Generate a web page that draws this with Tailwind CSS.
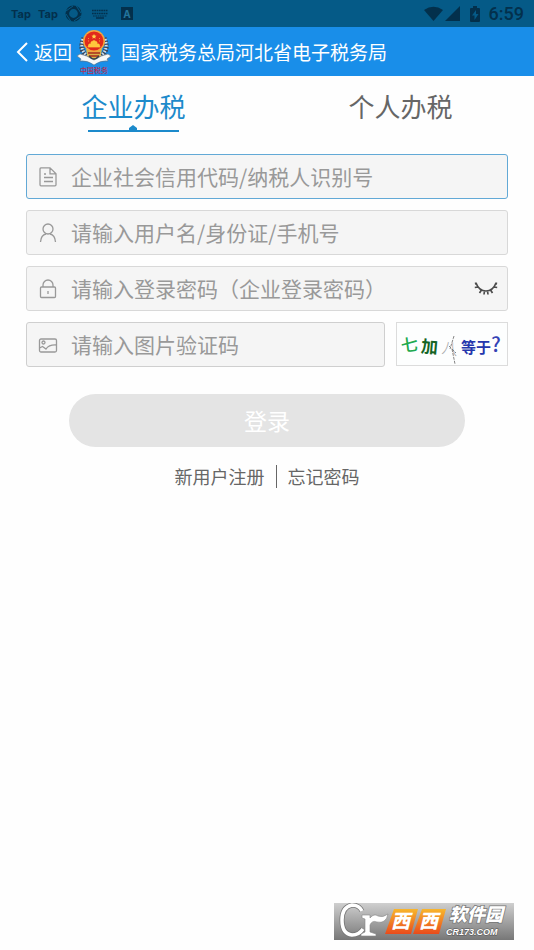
<!DOCTYPE html>
<html lang="zh-CN">
<head>
<meta charset="utf-8">
<meta name="viewport" content="width=device-width, initial-scale=1">
<title>国家税务总局河北省电子税务局</title>
<script src="https://cdn.jsdelivr.net/npm/@tailwindcss/browser@4"></script>
</head>
<body class="relative min-h-screen bg-[#fefefe] font-['Noto_Sans_CJK_SC',sans-serif] text-[#666]">

<!-- System status bar -->
<div class="flex h-[27px] items-center justify-between bg-[#055a87] pl-[11px] pr-[10px] text-[#03304c]">
  <div class="flex items-center font-['Inter',sans-serif] text-[11px] font-bold leading-4">
    <span class="w-[27px]">Tap</span>
    <span class="w-[27px]">Tap</span>
    <svg class="mr-[10px] size-[17px]" viewBox="0 0 17 17" fill="none" stroke="currentColor" stroke-width="3.600" aria-hidden="true">
      <circle cx="8.500" cy="8.500" r="6.200"/>
      <path d="M1 6L8 1M11 .5L16 8M16 11L9 16M6 16.500L1 9" stroke="#055a87" stroke-width="1"/>
    </svg>
    <svg class="mr-[13px] h-[10px] w-[16px]" viewBox="0 0 16 10" fill="none" stroke="currentColor" aria-hidden="true">
      <path d="M0 1.500h16M0 4.500h16" stroke-width="1.500" stroke-dasharray="1.700 .6"/><path d="M1 7h14" stroke-width="1" stroke-dasharray="1.700 .6"/><path d="M4 9h8" stroke-width="1.500"/>
    </svg>
    <span class="flex h-[13px] w-[12px] items-center justify-center bg-[#03304c] text-[10px] text-[#23759c]">A</span>
  </div>
  <div class="flex items-center">
    <svg class="h-[16px] w-[57px]" viewBox="0 0 57 16" fill="currentColor" aria-hidden="true">
      <path d="M0 4Q9.500-2.500 19 4L9.500 15z"/>
      <path d="M36 0V15H21z"/>
      <path fill-rule="evenodd" d="M49 0h4v2h2q1 0 1 1v12q0 1-1 1h-8q-1 0-1-1V3q0-1 1-1h2zM52 4l-4 5.500h2.500V14l4-6H52z"/>
    </svg>
    <span class="ml-[8px] font-['Roboto',sans-serif] text-[18px] font-medium leading-6">6:59</span>
  </div>
</div>

<!-- App header -->
<header class="flex h-[49px] items-center bg-[#198ee9] pl-[16px] text-[19px] leading-7 text-white">
  <button type="button" class="flex items-center gap-[6px]">
    <svg class="h-[20px] w-[12px]" viewBox="0 0 12 20" fill="none" stroke="currentColor" stroke-width="2" aria-hidden="true"><path d="M11 1L2 10l9 9"/></svg>
    <span>返回</span>
  </button>
  <svg class="ml-[5px] h-[46px] w-[34px] shrink-0" viewBox="0 0 34 46" role="img" aria-label="中国税务">
    <g fill="none" stroke="#39475b" stroke-width="5" stroke-dasharray="2 1"><path d="M7 9Q1 22 12 29M27 9Q33 22 22 29"/></g>
    <g fill="none" stroke="#d9dfe3" stroke-width="3" stroke-dasharray="1.500 1.500"><path d="M6 10Q2 22 12 28M28 10Q32 22 22 28"/></g>
    <path d="M9 20Q17 17 25 20L23 30L17 33L11 30z" fill="#d8b24b"/>
    <path d="M12 21h10M11 24h12M12 27h10" stroke="#a92c1e" stroke-width="1.500"/>
    <circle cx="17" cy="12" r="11" fill="#f5a63c"/>
    <circle cx="17" cy="12" r="9.500" fill="#e12a1c"/>
    <path d="M17 5l.8 1.600 1.700.2-1.300 1.200.4 1.700-1.600-.9-1.600.9.4-1.700-1.300-1.200 1.700-.2z" fill="#ffd44d"/>
    <path d="M11 18l1-3h2v-2l3-1.500 3 1.500v2h2l1 3zM11 9l1 1M23 9l-1 1M11 12h1M22 12h1" fill="#ffc83c" stroke="#ffc83c" stroke-width=".7"/>
    <path d="M0 27L3 25Q9 26 17 31Q25 26 31 25L34 27L30 30L31 32Q24 31 17 36Q10 31 3 32L4 30z" fill="#f6f8f8" stroke="#64727e" stroke-width=".6"/>
    <path d="M12 27Q17 33 22 27" fill="none" stroke="#36424f" stroke-width="1.500"/>
    <text x="3" y="44" font-family="Noto Sans CJK SC, sans-serif" font-size="7" font-weight="500" fill="#b32e55">中国税务</text>
  </svg>
  <h1 class="ml-[10px] whitespace-nowrap">国家税务总局河北省电子税务局</h1>
</header>

<main>
  <!-- Account type -->
  <div class="grid grid-cols-2 text-[26px] leading-[38px]" role="tablist">
    <button type="button" role="tab" aria-selected="true" class="flex flex-col items-center pt-[11px] text-[#1c8acb]">
      <span>企业办税</span>
      <svg class="h-[7px] w-[91px]" viewBox="0 0 91 7" fill="currentColor" aria-hidden="true"><path d="M0 5h41v-2l4-3 4 3v2h42v2H0z"/></svg>
    </button>
    <button type="button" role="tab" aria-selected="false" class="flex flex-col items-center pt-[11px]">个人办税</button>
  </div>

  <form class="flex flex-col gap-[11px] px-[26px] pt-[22px] text-[21px] leading-[30px]">
    <label class="flex h-[45px] items-center gap-[13px] rounded-[3px] border border-[#62a9d6] bg-[#f5f5f5] pl-[11px]">
      <svg class="size-[20px] shrink-0" viewBox="0 0 20 20" fill="none" stroke="#999" stroke-width="1.300" aria-hidden="true"><path d="M3 .8h9l6 6v11q0 1-1 1H3q-1 0-1-1V2q0-1 1-1.200zM12 .8v6h6M6 10.500h9M6 14.500h9M6 7h2"/></svg>
      <input type="text" aria-label="企业社会信用代码/纳税人识别号" placeholder="企业社会信用代码/纳税人识别号" class="h-8 min-w-0 flex-1 bg-transparent pb-[2px] outline-none placeholder:text-[#999]">
    </label>
    <label class="flex h-[45px] items-center gap-[13px] rounded-[3px] border border-[#d8d8d8] bg-[#f5f5f5] pl-[11px]">
      <svg class="size-[20px] shrink-0" viewBox="0 0 20 20" fill="none" stroke="#999" stroke-width="1.300" aria-hidden="true"><circle cx="10" cy="6" r="5"/><path d="M2.500 19Q3 12 8 11M12 11Q17 12 17.500 19"/></svg>
      <input type="text" aria-label="用户名" placeholder="请输入用户名/身份证/手机号" class="h-8 min-w-0 flex-1 bg-transparent pb-[2px] outline-none placeholder:text-[#999]">
    </label>
    <div class="flex h-[45px] items-center rounded-[3px] border border-[#d8d8d8] bg-[#f5f5f5] pl-[11px] pr-[9px]">
      <label class="flex min-w-0 flex-1 items-center gap-[13px]">
        <svg class="size-[20px] shrink-0" viewBox="0 0 20 20" fill="none" stroke="#999" stroke-width="1.300" aria-hidden="true"><rect x="2.500" y="8" width="15" height="10.500" rx="1"/><path d="M5 8V6a5 5 0 0 1 10 0v2M10 12v3"/></svg>
        <input type="password" aria-label="登录密码" placeholder="请输入登录密码（企业登录密码）" class="h-8 min-w-0 flex-1 bg-transparent pb-[2px] outline-none placeholder:text-[#999]">
      </label>
      <button type="button" aria-label="显示密码">
        <svg class="h-[13px] w-[24px]" viewBox="0 0 24 13" fill="none" stroke="#4c4c4c" stroke-width="1.700" aria-hidden="true"><path d="M2 1Q5 9 12 9T22 1M4 5L.8 5.500M7.500 8L5.500 11M10.500 9L10 12.500M13.500 9l.5 3.500M16.500 8l2 3M20 5l3.200.5M2 2.500L1.500.5M22 2.500l.5-2"/></svg>
      </button>
    </div>
    <div class="flex gap-[11px]">
      <label class="flex h-[45px] min-w-0 flex-1 items-center gap-[13px] rounded-[3px] border border-[#cfcfcf] bg-[#f5f5f5] pl-[11px]">
        <svg class="size-[20px] shrink-0" viewBox="0 0 20 20" fill="none" stroke="#999" stroke-width="1.300" aria-hidden="true"><rect x="1.500" y="4" width="17" height="13" rx="1.500"/><circle cx="5.500" cy="7.500" r="1.500"/><path d="M1.500 13l3-1.500L8 14Q11 9.500 18.500 10"/></svg>
        <input type="text" aria-label="图片验证码" placeholder="请输入图片验证码" class="h-8 min-w-0 flex-1 bg-transparent pb-[2px] outline-none placeholder:text-[#999]">
      </label>
      <button type="button" aria-label="更换验证码" class="h-[44px] w-[112px] shrink-0 border border-[#dcdcdc] bg-[#fdfefe]">
        <svg class="h-[42px] w-[110px]" viewBox="0 0 110 42" font-family="Noto Sans CJK SC, sans-serif" aria-hidden="true">
          <text x="4" y="28" font-size="17" font-weight="500" fill="#20a94e" transform="rotate(-7 12 22)">七</text>
          <text x="24" y="30" font-size="17" font-weight="700" fill="#146424" transform="rotate(5 32 24)">加</text>
          <text x="45" y="31" font-size="16" font-weight="300" fill="#aaa" transform="rotate(8 52 25)">八</text>
          <path d="M57 13l-4 13M52 23l7 7M55 26l3 15" fill="none" stroke="#777" stroke-width=".9" stroke-dasharray="3 1"/>
          <text x="64" y="30" font-size="15" font-weight="700" fill="#2537ad">等</text>
          <text x="79" y="30" font-size="15" font-weight="700" fill="#2537ad">于</text>
          <text x="94" y="29" font-size="20" font-weight="500" fill="#3443b5">?</text>
        </svg>
      </button>
    </div>
    <button type="submit" class="mx-[43px] mt-[16px] h-[53px] rounded-full bg-[#e4e4e4] pb-[2px] text-[23px] text-white">登录</button>
  </form>

  <nav class="flex items-center justify-center pt-[18px] text-[18px] leading-[23px]">
    <a href="#register" class="border-r border-[#666] pr-[11px]">新用户注册</a>
    <a href="#forgot" class="pl-[11px]">忘记密码</a>
  </nav>
</main>

<!-- Site badge laid over the page corner -->
<svg class="absolute bottom-[10px] right-[20px] h-[37px] w-[180px]" viewBox="0 0 180 37" role="img" aria-label="西西软件园 CR173.COM">
  <defs>
    <linearGradient id="plate" x2="0" y2="1"><stop stop-color="#cfcfcf"/><stop offset="1" stop-color="#777"/></linearGradient>
    <linearGradient id="fire" x2="0" y2="1"><stop stop-color="#f8b62d"/><stop offset="1" stop-color="#e94b1c"/></linearGradient>
  </defs>
  <path d="M0 0h180v37H0z" fill="url(#plate)"/>
  <path d="M28 8Q25 2 18 2Q8 4 8 17Q8 31 18 32Q25 32 29 26" fill="none" stroke="#777" stroke-width="5"/>
  <path d="M28 8Q25 2 18 2Q8 4 8 17Q8 31 18 32Q25 32 29 26" fill="none" stroke="#fff" stroke-width="3.500"/>
  <path d="M28 12h8v3Q40 10 44 13Q49 15 54 11Q52 21 43 19Q38 17 36 22V29l6 2v2H27v-2l4-2V16l-3-1z" fill="#fff" stroke="#888" stroke-width=".6"/>
  <path d="M60 6h24l-7 25H51zM88 6h24l-7 25H79z" fill="url(#fire)"/>
  <g font-family="Noto Sans CJK SC, sans-serif" font-weight="900" fill="#fff" font-style="italic">
    <text x="57" y="25" font-size="19">西</text>
    <text x="85" y="25" font-size="19">西</text>
    <text x="115" y="18" font-size="18" stroke="#777" stroke-width="1.500" paint-order="stroke">软件园</text>
  </g>
  <text x="112" y="32" font-family="Liberation Sans, sans-serif" font-size="9" font-weight="700" font-style="italic" fill="#fff" stroke="#555" stroke-width="1" paint-order="stroke">CR173.COM</text>
</svg>
</body>
</html>
